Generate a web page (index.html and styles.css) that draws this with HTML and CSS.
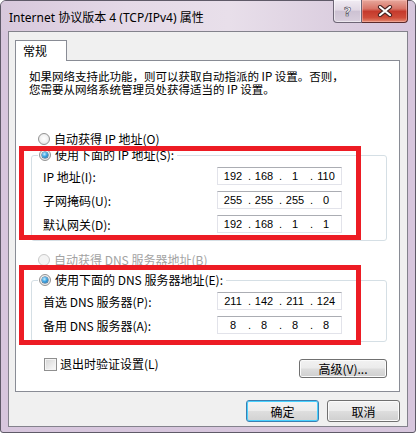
FILE: index.html
```html
<!DOCTYPE html>
<html lang="zh-CN">
<head>
<meta charset="utf-8">
<title>Internet 协议版本 4 (TCP/IPv4) 属性</title>
<link rel="stylesheet" href="styles.css">
</head>
<body>
<div class="window">
  <div class="titlebar">
    <span class="title">Internet 协议版本 4 (TCP/IPv4) 属性</span>
    <div class="caption-btns">
      <div class="cbtn help"><span class="qmark">?</span></div>
      <div class="cbtn close">
        <svg width="16" height="12" viewBox="0 0 16 12">
          <path d="M3 2 L13 10 M13 2 L3 10" stroke="#4a2422" stroke-width="4.2" stroke-linecap="round" fill="none"/>
          <path d="M3 2 L13 10 M13 2 L3 10" stroke="#ffffff" stroke-width="2.2" stroke-linecap="round" fill="none"/>
        </svg>
      </div>
    </div>
  </div>
  <div class="client">
    <div class="tabs"><div class="tab">常规</div></div>
    <div class="panel">
      <p class="intro">如果网络支持此功能，则可以获取自动指派的 IP 设置。否则，<br>您需要从网络系统管理员处获得适当的 IP 设置。</p>

      <div class="radio-row auto"><span class="radio"></span><span>自动获得 IP 地址(O)</span></div>

      <div class="group g1">
        <div class="legend radio-row"><span class="radio checked"></span><span>使用下面的 IP 地址(S):</span></div>
        <div class="field-row first"><span class="label">IP 地址(I):</span>
          <div class="ip"><span class="n">192</span><span class="d">.</span><span class="n">168</span><span class="d">.</span><span class="n">1</span><span class="d">.</span><span class="n">110</span></div>
        </div>
        <div class="field-row"><span class="label">子网掩码(U):</span>
          <div class="ip"><span class="n">255</span><span class="d">.</span><span class="n">255</span><span class="d">.</span><span class="n">255</span><span class="d">.</span><span class="n">0</span></div>
        </div>
        <div class="field-row"><span class="label">默认网关(D):</span>
          <div class="ip"><span class="n">192</span><span class="d">.</span><span class="n">168</span><span class="d">.</span><span class="n">1</span><span class="d">.</span><span class="n">1</span></div>
        </div>
      </div>

      <div class="radio-row auto dns disabled"><span class="radio"></span><span>自动获得 DNS 服务器地址(B)</span></div>

      <div class="group g2">
        <div class="legend radio-row"><span class="radio checked"></span><span>使用下面的 DNS 服务器地址(E):</span></div>
        <div class="field-row first"><span class="label">首选 DNS 服务器(P):</span>
          <div class="ip"><span class="n">211</span><span class="d">.</span><span class="n">142</span><span class="d">.</span><span class="n">211</span><span class="d">.</span><span class="n">124</span></div>
        </div>
        <div class="field-row"><span class="label">备用 DNS 服务器(A):</span>
          <div class="ip"><span class="n">8</span><span class="d">.</span><span class="n">8</span><span class="d">.</span><span class="n">8</span><span class="d">.</span><span class="n">8</span></div>
        </div>
      </div>

      <div class="bottom-row">
        <label class="check-row"><span class="checkbox"></span><span>退出时验证设置(L)</span></label>
        <div class="btn adv">高级(V)...</div>
      </div>

      <div class="mark m1"></div>
      <div class="mark m2"></div>
    </div>
    <div class="actions">
      <div class="btn default">确定</div>
      <div class="btn">取消</div>
    </div>
  </div>
</div>
</body>
</html>
```
FILE: styles.css
```css
html, body {
  margin: 0;
  padding: 0;
  background: #ffffff;
}

body {
  font-family: "Noto Sans CJK SC", "Noto Sans", sans-serif;
  font-size: 12px;
  color: #000;
}

.window {
  width: 416px;
  height: 433px;
  box-sizing: border-box;
  border: 1px solid #5f5a68;
  border-radius: 6px 6px 3px 3px;
  background: #d7c6dd;
  display: flex;
  flex-direction: column;
}

.titlebar {
  height: 30px;
  display: flex;
  align-items: flex-start;
  border-radius: 5px 5px 0 0;
  background: linear-gradient(90deg, #d8c8dc 0%, #e4d9e7 30%, #e8dfea 55%, #dccfe0 80%, #d6c5dc 100%);
}

.title {
  font-family: "Noto Sans", "Noto Sans CJK SC", sans-serif;
  font-size: 12px;
  line-height: 28px;
  margin-top: 3px;
  padding-left: 8px;
  color: #000;
  white-space: nowrap;
}

.caption-btns {
  margin-left: auto;
  margin-right: 7px;
  margin-top: -1px;
  display: flex;
}

.cbtn {
  height: 23px;
  box-sizing: border-box;
  display: flex;
  align-items: center;
  justify-content: center;
  border: 1px solid #6e6676;
  border-top: none;
}

.help {
  width: 29px;
  border-radius: 0 0 0 4px;
  background: linear-gradient(180deg, #f1ecf3 0%, #e1d8e4 45%, #cdc2d3 52%, #d9cfdd 100%);
  box-shadow: inset 0 0 0 1px rgba(255, 255, 255, 0.5);
}

.qmark {
  font-family: "DejaVu Sans", sans-serif;
  font-weight: bold;
  font-size: 13px;
  line-height: 14px;
  color: #fff;
  -webkit-text-stroke: 0.6px #4d4655;
  margin-top: 1px;
}

.close {
  width: 46px;
  border-left: none;
  border-color: #5a2a2a;
  border-radius: 0 0 4px 0;
  background: linear-gradient(180deg, #e7a89c 0%, #d87467 40%, #c53a2c 52%, #cf4d3a 80%, #e48a72 100%);
  box-shadow: inset 0 0 0 1px rgba(255, 200, 190, 0.45);
}

.close svg {
  display: block;
}

.client {
  margin: 0 7px;
  height: 396px;
  box-sizing: border-box;
  border: 1px solid #83828c;
  background: #f0f0f0;
  padding: 8px 7px 0 6px;
  display: flex;
  flex-direction: column;
}

.tabs {
  display: flex;
}

.tab {
  width: 52px;
  height: 21px;
  box-sizing: border-box;
  border: 1px solid #898c95;
  border-bottom: none;
  background: #fff;
  margin-bottom: -1px;
  position: relative;
  z-index: 1;
  padding-left: 7px;
  line-height: 19px;
}

.panel {
  height: 332px;
  box-sizing: border-box;
  border: 1px solid #898c95;
  background: #fff;
  padding: 9px 13px 0;
  position: relative;
}

.intro {
  margin: 0;
  font-size: 11.5px;
  line-height: 13px;
  white-space: nowrap;
}

.radio-row {
  display: flex;
  align-items: center;
  height: 14px;
  line-height: 14px;
  gap: 4px;
  white-space: nowrap;
}

.auto {
  margin-top: 36px;
  margin-left: 9px;
}

.auto.dns {
  margin-top: 12px;
}

.disabled {
  color: #a3a3a3;
}

.radio {
  width: 12px;
  height: 12px;
  box-sizing: border-box;
  border-radius: 50%;
  border: 1px solid #939393;
  background: radial-gradient(circle at 50% 45%, #ffffff 0%, #f4f4f4 45%, #d6d6d6 100%);
  display: flex;
  align-items: center;
  justify-content: center;
  flex: none;
}

.disabled .radio {
  border-color: #c9c9c9;
  background: #f4f4f4;
}

.radio.checked::after {
  content: "";
  width: 6px;
  height: 6px;
  border-radius: 50%;
  background: radial-gradient(circle at 40% 35%, #c9f0ff 0%, #3fa6e4 45%, #145a94 100%);
  box-shadow: 0 0 0 0.5px #1d4f7a;
}

.group {
  width: 356px;
  margin-left: 2px;
  box-sizing: border-box;
  border: 1px solid #d5dfe5;
  border-radius: 3px;
  padding: 0 0 7px 11px;
}

.g1 {
  margin-top: 9px;
}

.g2 {
  margin-top: 13px;
}

.legend {
  margin-top: -8px;
  margin-left: -5px;
  padding: 0 3px 0 1px;
  background: #fff;
  width: fit-content;
}

.field-row {
  display: flex;
  align-items: center;
  height: 18px;
  margin-top: 6px;
}

.field-row.first {
  margin-top: 5px;
}

.label {
  width: 174px;
  white-space: nowrap;
}

.ip {
  width: 125px;
  height: 18px;
  box-sizing: border-box;
  border: 1px solid #e2e3ea;
  border-top-color: #abadb3;
  background: #fff;
  display: flex;
  align-items: center;
  padding-left: 2px;
  font-family: "Liberation Sans", sans-serif;
  font-size: 11px;
  line-height: 16px;
}

.ip .n {
  width: 26px;
  text-align: center;
}

.ip .d {
  width: 5px;
  text-align: right;
}

.bottom-row {
  width: 356px;
  margin-left: 2px;
  margin-top: 15px;
  display: flex;
  align-items: flex-start;
  justify-content: space-between;
}

.check-row {
  display: flex;
  align-items: center;
  gap: 3px;
  height: 14px;
  line-height: 14px;
  margin-left: 13px;
  white-space: nowrap;
}

.checkbox {
  width: 13px;
  height: 13px;
  box-sizing: border-box;
  border: 1px solid #8f8f8f;
  background: linear-gradient(135deg, #d4d4d4 0%, #ececec 60%, #fafafa 100%);
  box-shadow: inset 0 0 0 1px #f4f4f4;
  flex: none;
}

.btn {
  box-sizing: border-box;
  border: 1px solid #707070;
  border-radius: 3px;
  background: linear-gradient(180deg, #f2f2f2 0%, #ebebeb 48%, #dddddd 52%, #cfcfcf 100%);
  box-shadow: inset 0 0 0 1px #fbfbfb;
  display: flex;
  align-items: center;
  justify-content: center;
  white-space: nowrap;
}

.adv {
  width: 88px;
  height: 19px;
  margin-top: 2px;
  line-height: 17px;
}

.actions {
  display: flex;
  justify-content: flex-end;
  gap: 8px;
  margin-top: 8px;
}

.actions .btn {
  width: 73px;
  height: 22px;
}

.btn.default {
  border-color: #3c7fb1;
  box-shadow: inset 0 0 0 1px #48d1ff;
  background: linear-gradient(180deg, #f4f4f4 0%, #ececec 48%, #dedede 52%, #d2d2d2 100%);
}

.mark {
  position: absolute;
  left: 3px;
  width: 342px;
  box-sizing: border-box;
  border: 5px solid #ed1c24;
  pointer-events: none;
}

.m1 {
  top: 85px;
  height: 94px;
}

.m2 {
  top: 204px;
  height: 80px;
}
```
